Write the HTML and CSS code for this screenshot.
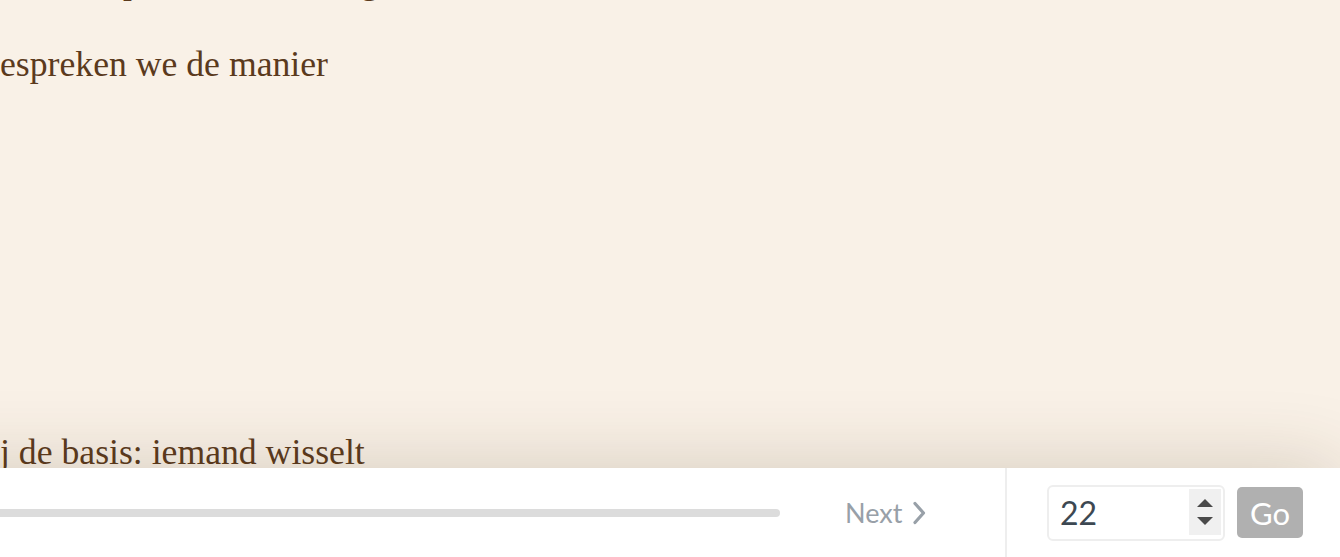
FILE: index.html
```html
<!DOCTYPE html>
<html lang="nl">
<head>
<meta charset="utf-8">
<title>Reader</title>
<link rel="stylesheet" href="styles.css">
</head>
<body>
<div class="page">
  <main class="reader">
    <div class="column">
      <p class="line">die het op de manier van groei.</p>
      <p class="line">espreken we de manier</p>
      <div class="spacer"></div>
      <p class="line">j de basis: iemand wisselt</p>
    </div>
  </main>
  <footer class="bar">
    <div class="progress-area">
      <div class="progress"></div>
      <a class="next" href="#">Next
        <svg class="chev" width="16" height="26" viewBox="0 0 16 26" aria-hidden="true"><path d="M4 3.5 L12.5 13 L4 22.5" fill="none" stroke="currentColor" stroke-width="3.2" stroke-linecap="round" stroke-linejoin="round"/></svg>
      </a>
    </div>
    <div class="jump">
      <div class="number-box">
        <input class="number" type="text" value="22">
        <div class="spin">
          <span class="tri up"></span>
          <span class="tri down"></span>
        </div>
      </div>
      <button class="go" type="button">Go</button>
    </div>
  </footer>
</div>
</body>
</html>
```

FILE: styles.css
```css
html, body {
  margin: 0;
  padding: 0;
  height: 100%;
  overflow: hidden;
}
body {
  background: #f9f1e7;
}
.page {
  height: 557px;
  display: flex;
  flex-direction: column;
  overflow: hidden;
}
.reader {
  height: 468px;
  flex: none;
  overflow: hidden;
  background: #f9f1e7;
}
.column {
  margin-top: -45px;
  font-family: "Liberation Serif", "Times New Roman", serif;
  font-size: 35.7px;
  color: #5b3a1d;
}
.line {
  margin: 0 0 31px 0;
  line-height: 52px;
  white-space: nowrap;
}
.spacer {
  height: 305px;
}
.bar {
  flex: none;
  height: 89px;
  background: #ffffff;
  display: flex;
  align-items: stretch;
  margin-left: -200px;
  padding-left: 200px;
  box-shadow: 0 0 80px 0 rgba(70, 50, 20, 0.2);
  font-family: Lato, "Open Sans", sans-serif;
}
.progress-area {
  width: 1005px;
  display: flex;
  align-items: center;
  flex: none;
}
.progress {
  width: 780px;
  height: 8px;
  border-radius: 0 4px 4px 0;
  background: #dcdcdc;
  flex: none;
}
.next {
  margin-left: 65px;
  display: flex;
  align-items: center;
  gap: 9px;
  color: #98a0a8;
  font-size: 27px;
  text-decoration: none;
}
.chev {
  display: block;
}
.jump {
  border-left: 2px solid #eeeeee;
  flex: 1;
  display: flex;
  align-items: center;
  padding-left: 40px;
  gap: 12px;
}
.number-box {
  width: 178px;
  height: 56px;
  box-sizing: border-box;
  border: 2px solid #eeeeee;
  border-radius: 6px;
  display: flex;
  align-items: stretch;
  padding: 2px 2px 4px 0;
  background: #fff;
}
.number {
  flex: 1;
  min-width: 0;
  border: none;
  outline: none;
  background: transparent;
  font-family: Lato, "Open Sans", sans-serif;
  font-size: 32px;
  color: #3d4852;
  padding: 2px 0 0 11px;
}
.spin {
  width: 32px;
  background: #f0f0f0;
  display: flex;
  flex-direction: column;
  align-items: center;
  justify-content: center;
  gap: 10px;
}
.tri {
  width: 0;
  height: 0;
  border-left: 8px solid transparent;
  border-right: 8px solid transparent;
}
.tri.up {
  border-bottom: 8px solid #4a4a4a;
}
.tri.down {
  border-top: 8px solid #4a4a4a;
}
.go {
  width: 66px;
  height: 51px;
  border: none;
  border-radius: 5px;
  background: #b0b0b0;
  color: #ffffff;
  font-family: Lato, "Open Sans", sans-serif;
  font-size: 31px;
  padding: 0;
}
```
